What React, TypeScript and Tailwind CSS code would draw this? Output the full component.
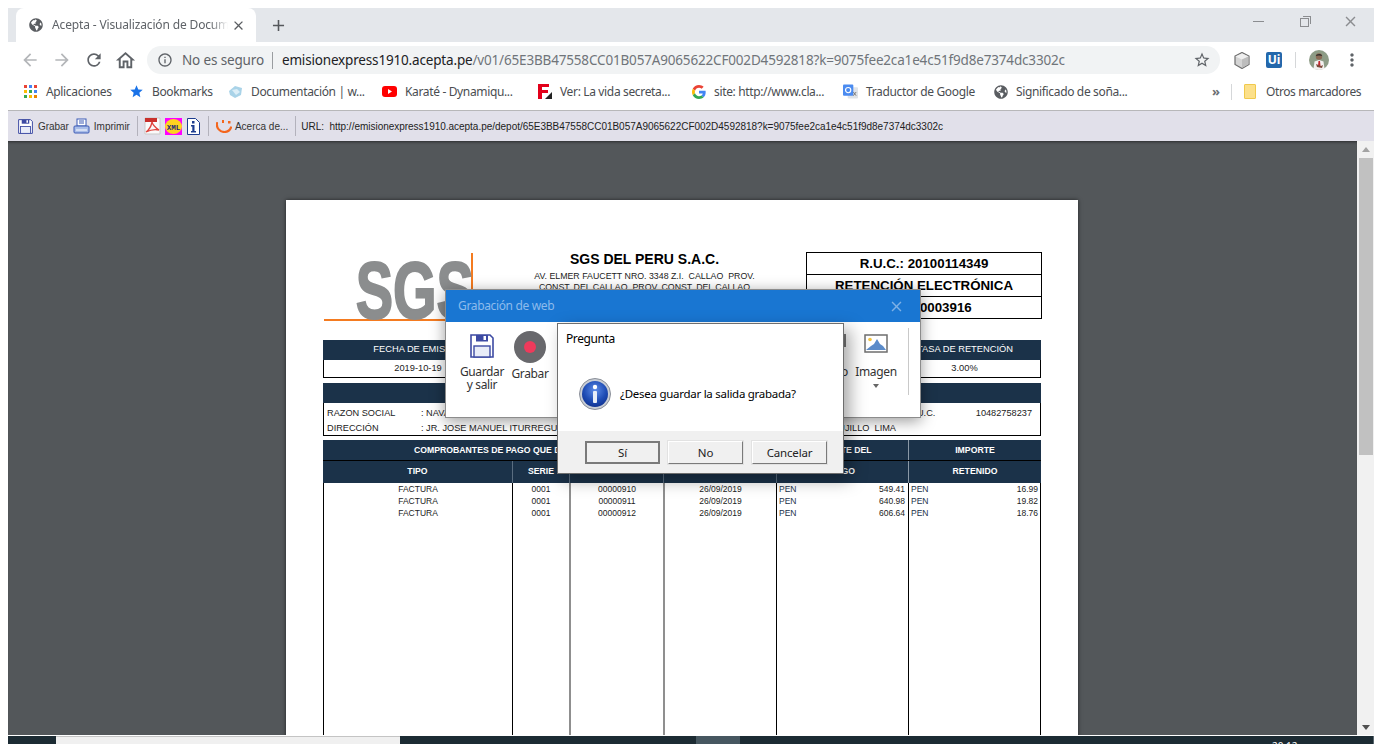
import { MdArrowBack, MdArrowForward, MdRefresh, MdOutlineHome, MdStarBorder, MdInfoOutline, MdClose, MdAdd, MdMoreVert, MdStar } from "react-icons/md";
import { FaGlobeAmericas } from "react-icons/fa";

const ui = "font-['Noto_Sans','Open_Sans',sans-serif]";
const doc = "font-['Liberation_Sans',Arial,sans-serif]";

function Floppy({ size = 16 }: { size?: number }) {
  return (
    <svg width={size} height={size} viewBox="0 0 24 24" fill="none">
      <path d="M1 1h19l3 3v19H1z" fill="#fff" stroke="#3d4aa3" strokeWidth="1.6" />
      <rect x="6" y="1" width="12" height="6.5" fill="#3d4aa3" />
      <rect x="13.5" y="2" width="2.5" height="4" fill="#fff" />
      <rect x="4" y="12" width="16" height="11" fill="#e8ecf8" stroke="#3d4aa3" strokeWidth="1.4" />
    </svg>
  );
}

function AppsIcon() {
  const colors = ["#ea4335", "#4285f4", "#ea4335", "#fbbc05", "#34a853", "#4285f4", "#34a853", "#fbbc05", "#ea8600"];
  return (
    <div className="grid w-[13px] h-[13px] grid-cols-3 gap-[2px]">
      {colors.map((c, i) => (
        <span key={i} style={{ background: c }} />
      ))}
    </div>
  );
}

function GoogleG() {
  return (
    <svg width="14" height="14" viewBox="0 0 48 48">
      <path fill="#EA4335" d="M24 9.5c3.5 0 6.700 1.300 9.100 3.500l6.800-6.800C35.800 2.400 30.300 0 24 0 14.600 0 6.500 5.400 2.600 13.200l7.900 6.200C12.400 13.600 17.700 9.500 24 9.500z" />
      <path fill="#4285F4" d="M46.900 24.500c0-1.600-.1-3.100-.4-4.500H24v9h12.900c-.6 3-2.200 5.500-4.700 7.200l7.700 6C44.400 37.900 46.900 31.800 46.900 24.500z" />
      <path fill="#FBBC05" d="M10.500 28.600c-.5-1.400-.8-3-.8-4.600s.3-3.200.8-4.600l-7.900-6.200C.9 16.500 0 20.100 0 24s.9 7.500 2.600 10.800l7.900-6.200z" />
      <path fill="#34A853" d="M24 48c6.500 0 11.900-2.100 15.900-5.800l-7.700-6c-2.200 1.400-4.900 2.300-8.200 2.300-6.300 0-11.600-4.200-13.500-9.900l-7.900 6.200C6.500 42.600 14.600 48 24 48z" />
    </svg>
  );
}

function Bookmark({ icon, label, width }: { icon: React.ReactNode; label: string; width: string }) {
  return (
    <div className={`flex items-center shrink-0 ${width}`}>
      <span className="flex w-[15px] h-4 items-center justify-center shrink-0">{icon}</span>
      <span className="ml-2 text-[12px] text-[#4a4d51] whitespace-nowrap tracking-[-0.35px]">{label}</span>
    </div>
  );
}

function TabStrip() {
  return (
    <div className="flex h-[34px] shrink-0 bg-[#e4e7eb] pl-2">
      <div className="flex w-[240px] items-center rounded-t-lg bg-white pl-[13px] pr-[10px]">
        <FaGlobeAmericas className="shrink-0 text-[14px] text-[#5a5d61]" />
        <span className="ml-[9px] w-[176px] overflow-hidden whitespace-nowrap text-[12px] text-[#5f6368] tracking-[-0.15px] [mask-image:linear-gradient(90deg,#000_90%,transparent)]">
          Acepta - Visualización de Documento
        </span>
        <MdClose className="ml-auto text-[15px] text-[#5a5d61]" />
      </div>
      <MdAdd className="ml-[13px] mt-[8px] text-[19px] text-[#55585c]" />
      <div className="ml-auto flex items-start">
        <div className="mt-[13px] mr-[36px] h-px w-[11px] bg-[#8b8d90]" />
        <div className="relative mt-[10px] mr-[33px] h-[9px] w-[9px] border border-[#8b8d90] bg-[#e4e7eb]">
          <div className="absolute -top-[3px] -right-[3px] h-[8px] w-[8px] border-t border-r border-[#8b8d90]" />
        </div>
        <MdClose className="mt-[5px] mr-[15px] text-[17px] text-[#8b8d90]" />
      </div>
    </div>
  );
}

function AddressBar() {
  return (
    <div className="flex h-9 shrink-0 items-center bg-white pl-[12px]">
      <MdArrowBack className="text-[20px] text-[#b4b6b9]" />
      <MdArrowForward className="ml-3 text-[20px] text-[#b4b6b9]" />
      <MdRefresh className="ml-3 text-[20px] text-[#5f6368]" />
      <MdOutlineHome className="ml-[10px] text-[23px] text-[#5f6368]" />
      <div className="ml-[10px] flex h-7 w-[1073px] items-center rounded-full bg-[#f1f3f4] pl-[10px] pr-[9px]">
        <MdInfoOutline className="shrink-0 text-[16px] text-[#5f6368]" />
        <span className="ml-[9px] text-[13.5px] text-[#5f6368] whitespace-nowrap tracking-[-0.15px]">No es seguro</span>
        <span className="ml-2 mr-[9px] h-[17px] w-px bg-[#9a9da0]" />
        <span className="text-[13.5px] whitespace-nowrap text-[#70757a] tracking-[-0.17px]">
          <span className="text-[#202124]">emisionexpress1910.acepta.pe</span>
          /v01/65E3BB47558CC01B057A9065622CF002D4592818?k=9075fee2ca1e4c51f9d8e7374dc3302c
        </span>
        <MdStarBorder className="ml-auto shrink-0 text-[18px] text-[#5f6368]" />
      </div>
      <svg className="ml-[14px]" width="16" height="17" viewBox="0 0 16 17">
        <path d="M8 .5l7 3.500v8.500l-7 4-7-4V4z" fill="#d4d4d4" stroke="#6d6d6d" strokeWidth="1.200" />
        <path d="M1.500 4.500L8 7.500l6.500-3L8 1.500z" fill="#efefef" />
        <path d="M8 7.500V16l6.500-3.800V4.500z" fill="#bdbdbd" />
      </svg>
      <div className="ml-4 flex h-4 w-4 items-center justify-center rounded-[2px] bg-[#2367ab] text-[12px] font-bold text-white">Ui</div>
      <span className="ml-[13px] h-4 w-px bg-[#d5d7d9]" />
      <svg className="ml-[13px]" width="20" height="20" viewBox="0 0 20 20">
        <circle cx="10" cy="10" r="10" fill="#8d9c86" />
        <circle cx="10" cy="6.500" r="3.200" fill="#8a6a55" />
        <path d="M6.800 6c.2-2.600 6-2.800 6.400 0-2-.8-4.500-.8-6.400 0z" fill="#33302c" />
        <path d="M4.500 19l1-7.500 4.500-1.500 4.500 1.500 1 7.500-5.500 1z" fill="#f3f1ef" />
        <path d="M9.500 11h1.500l.5 5H9z" fill="#c1272d" />
        <path d="M7 14l5 2 2-1-1 3-5-1z" fill="#7d4a3a" />
      </svg>
      <MdMoreVert className="ml-[13px] text-[20px] text-[#5f6368]" />
    </div>
  );
}

function BookmarksBar() {
  return (
    <div className="flex h-8 shrink-0 items-center bg-white pb-[5px] pl-[15px]">
      <Bookmark width="w-[106px]" icon={<AppsIcon />} label="Aplicaciones" />
      <Bookmark width="w-[99px]" icon={<MdStar className="text-[17px] text-[#1a73e8]" />} label="Bookmarks" />
      <Bookmark
        width="w-[154px]"
        icon={
          <svg width="15" height="14" viewBox="0 0 15 14">
            <path d="M1 6l6-5 7 2-1 7-6 3-5-3z" fill="#a9d3e8" />
            <path d="M4 5l5-1 3 3-4 3z" fill="#dceef7" />
          </svg>
        }
        label="Documentación | w..."
      />
      <Bookmark
        width="w-[155px]"
        icon={
          <svg width="15" height="11" viewBox="0 0 15 11">
            <rect width="15" height="11" rx="3" fill="#f00" />
            <path d="M6 3l4 2.500L6 8z" fill="#fff" />
          </svg>
        }
        label="Karaté - Dynamiqu..."
      />
      <Bookmark
        width="w-[154px]"
        icon={
          <svg width="14" height="15" viewBox="0 0 14 15">
            <path d="M0 0h11v3H4v3h6v3H4v6H0z" fill="#e2001a" />
            <path d="M14 8v7H7z" fill="#222" />
          </svg>
        }
        label="Ver: La vida secreta..."
      />
      <Bookmark width="w-[152px]" icon={<GoogleG />} label="site: http://www.cla..." />
      <Bookmark
        width="w-[150px]"
        icon={
          <svg width="16" height="15" viewBox="0 0 16 15">
            <rect x="5" y="3" width="11" height="12" rx="1" fill="#dfe3e8" />
            <rect width="11" height="12" rx="1" fill="#4b8bf0" />
            <circle cx="5.500" cy="6" r="2.800" fill="none" stroke="#fff" strokeWidth="1.200" />
            <path d="M11 8l3 4m0-4l-3 4" stroke="#777" strokeWidth="1" />
          </svg>
        }
        label="Traductor de Google"
      />
      <Bookmark width="w-[219px]" icon={<FaGlobeAmericas className="text-[14px] text-[#5a5d61]" />} label="Significado de soña..." />
      <span className="text-[13px] font-bold leading-none text-[#6b6e72]">»</span>
      <span className="ml-[11px] h-4 w-px bg-[#d5d7d9]" />
      <span className="ml-[12px] h-[15px] w-[12px] rounded-[1px] border border-[#f0c94c] bg-[#fce08a]" />
      <span className="ml-[10px] text-[12px] text-[#4a4d51] whitespace-nowrap tracking-[-0.4px]">Otros marcadores</span>
    </div>
  );
}

function AcrobatBar() {
  const sep = "h-5 w-px bg-[#b3b2bc]";
  return (
    <div className={`flex h-[31px] shrink-0 items-center border-t border-[#b7b7b9] bg-[#e1e0ea] pl-[10px] text-[10px] text-[#333] ${doc}`}>
      <Floppy size={15} />
      <span className="ml-[5px] tracking-[-0.05px]">Grabar</span>
      <svg className="ml-[4px]" width="17" height="16" viewBox="0 0 17 16">
        <rect x="4" y="1" width="9" height="7" fill="#fff" stroke="#3d5bb5" />
        <path d="M6 3h5M6 5h5" stroke="#3d5bb5" />
        <rect x="1" y="8" width="15" height="7" rx="1" fill="#a9bde8" stroke="#3d5bb5" />
        <path d="M3 12h11" stroke="#fff" />
      </svg>
      <span className="ml-[4px]">Imprimir</span>
      <span className={`ml-[7px] ${sep}`} />
      <svg className="ml-[6px]" width="17" height="18" viewBox="0 0 17 18">
        <path d="M1 1h15v16H1z" fill="#fafafa" stroke="#c9c9c9" />
        <rect x="1" y="1" width="12" height="4" fill="#c9302c" />
        <path d="M8 5c-1 5-3 8-6 10 4-2 9-3 13-2-3-2-6-4-7-8z" fill="none" stroke="#e0443e" strokeWidth="1.300" />
      </svg>
      <svg className="ml-[4px]" width="17" height="17" viewBox="0 0 17 17">
        <rect width="17" height="17" fill="#f0f" />
        <ellipse cx="8.500" cy="8.500" rx="8.500" ry="7.500" fill="#ffd21f" />
        <text x="8.500" y="11.500" textAnchor="middle" fontSize="7.500" fontWeight="bold" fill="#1c2a7a" fontFamily="Liberation Mono">XML</text>
      </svg>
      <svg className="ml-[5px]" width="13" height="17" viewBox="0 0 13 17">
        <path d="M.5.5h8l4 4v12H.500z" fill="#fff" stroke="#1d3c8f" />
        <rect x="5" y="3" width="2.500" height="2.500" fill="#1d3c8f" />
        <path d="M4 7h3.500v6H9v1.500H4V13h1.300V8.500H4z" fill="#1d3c8f" />
      </svg>
      <span className={`ml-[8px] ${sep}`} />
      <svg className="ml-[7px]" width="16" height="14" viewBox="0 0 16 14">
        <path d="M1 4c-1 5 3 9 7.500 9 3 0 5.500-2 6.500-4.500" fill="none" stroke="#f4661e" strokeWidth="2.200" strokeLinecap="round" />
        <rect x="6" y="1" width="2" height="3" fill="#f4661e" />
        <rect x="12" y="2" width="2.500" height="2.500" fill="#f4661e" />
      </svg>
      <span className="ml-[3px]">Acerca de...</span>
      <span className={`ml-[7px] ${sep}`} />
      <span className="ml-[5px] whitespace-pre text-[#222] tracking-[-0.02px]">URL:  http://emisionexpress1910.acepta.pe/depot/65E3BB47558CC01B057A9065622CF002D4592818?k=9075fee2ca1e4c51f9d8e7374dc3302c</span>
    </div>
  );
}

const head = "bg-[#1b3249] text-white flex items-center justify-center";

function InvoiceHeader() {
  return (
    <div className="flex h-[68px]">
      <div className="ml-px flex h-[68px] w-[149px] mt-px items-end justify-end border-r-2 border-b-2 border-[#f47b20]">
        <span className="origin-right scale-x-70 text-[80px] font-bold leading-[58px] text-[#8b8d8e] translate-x-[3px] translate-y-[1px] [-webkit-text-stroke:2px_#8b8d8e]">SGS</span>
      </div>
      <div className="ml-[10px] w-[323px] text-center text-black">
        <p className="mt-[-1px] text-[14px] leading-[16px] font-bold">SGS DEL PERU S.A.C.</p>
        <p className="mt-[4px] whitespace-pre text-[8.8px] leading-[11px] text-[#222]">AV. ELMER FAUCETT NRO. 3348 Z.I.  CALLAO  PROV.</p>
        <p className="whitespace-pre text-[8.8px] leading-[11px] text-[#222]">CONST. DEL CALLAO  PROV. CONST. DEL CALLAO</p>
      </div>
      <div className="h-[67px] w-[236px] border border-black text-center text-[13.3px] font-bold text-black">
        <div className="flex h-[22px] items-center justify-center border-b border-black">R.U.C.: 20100114349</div>
        <div className="flex h-[22px] items-center justify-center border-b border-black pt-px">RETENCIÓN ELECTRÓNICA</div>
        <div className="flex h-[21px] items-center justify-center">R001-00003916</div>
      </div>
    </div>
  );
}

function InfoTables() {
  return (
    <>
      <div className="mt-[20px] w-[718px] text-[9.3px] text-[#222]">
        <div className="grid h-5 grid-cols-[189px_377px_152px]">
          <div className={head}>FECHA DE EMISIÓN</div>
          <div className={head} />
          <div className={head}>TASA DE RETENCIÓN</div>
        </div>
        <div className="grid h-[18px] grid-cols-[189px_377px_152px] border-b border-black">
          <div className="flex items-center justify-center border-l border-black">2019-10-19</div>
          <div />
          <div className="flex items-center justify-center border-r border-black">3.00%</div>
        </div>
      </div>
      <div className="mt-[5px] w-[718px] text-[9.2px] text-[#222]">
        <div className={`${head} h-5`} />
        <div className="h-[33px] border-x border-b border-black pl-[3px] pt-[2px]">
          <div className="flex h-[17px] items-center">
            <span className="w-[94px]">RAZON SOCIAL</span>
            <span>: NAVARRO SALAZAR JOSE</span>
            <span className="ml-auto w-[68px]">R.U.C.</span>
            <span className="mr-[8px]">10482758237</span>
          </div>
          <div className="flex h-[14px] items-center">
            <span className="w-[94px]">DIRECCIÓN</span>
            <span>: JR. JOSE MANUEL ITURREGUI 1180 URB. SANTA MARIA</span>
            <span className="ml-auto mr-[144px] whitespace-pre">TRUJILLO  LIMA</span>
          </div>
        </div>
      </div>
    </>
  );
}

const rows = [
  { num: "00000910", pago: "549.41", ret: "16.99" },
  { num: "00000911", pago: "640.98", ret: "19.82" },
  { num: "00000912", pago: "606.64", ret: "18.76" },
];
const cols = "grid w-[718px] grid-cols-[189px_57px_94px_113px_132px_133px]";

function VoucherTable() {
  return (
    <div className="mt-[4px] w-[718px] text-[8.5px] text-[#222]">
      <div className={`${cols} h-[21px] border-b border-black text-[8.7px] font-bold`}>
        <div className={`${head} col-span-4 pt-[2px]`}>COMPROBANTES DE PAGO QUE DAN ORIGEN A LA RETENCIÓN</div>
        <div className={`${head} pt-[2px]`}>IMPORTE DEL</div>
        <div className={`${head} border-l border-[#8a98a6] pt-[2px]`}>IMPORTE</div>
      </div>
      <div className={`${cols} h-[22px] text-[8.7px] font-bold`}>
        <div className={`${head} pb-px`}>TIPO</div>
        <div className={`${head} border-l border-[#5a6d80] pb-px`}>SERIE</div>
        <div className={`${head} border-l border-[#5a6d80] pb-px`}>NÚMERO</div>
        <div className={`${head} border-l border-[#5a6d80] pb-px`}>FECHA</div>
        <div className={`${head} border-l border-[#5a6d80] pb-px`}>PAGO</div>
        <div className={`${head} border-l border-[#8a98a6] pb-px`}>RETENIDO</div>
      </div>
      <div className="grid h-[400px] w-[718px] grid-cols-[188px_57px_94px_113px_132px_132px] border-x border-black leading-[12px]">
        <div className="text-center">
          {rows.map((r) => <p key={r.num}>FACTURA</p>)}
        </div>
        <div className="border-l border-black text-center">
          {rows.map((r) => <p key={r.num}>0001</p>)}
        </div>
        <div className="border-l-2 border-[#8f8f8f] text-center">
          {rows.map((r) => <p key={r.num}>{r.num}</p>)}
        </div>
        <div className="border-l-2 border-[#8f8f8f] text-center">
          {rows.map((r) => <p key={r.num}>26/09/2019</p>)}
        </div>
        <div className="border-l border-black pl-[2px] pr-[3px]">
          {rows.map((r) => (
            <p key={r.num} className="flex justify-between"><span className="text-[#1b3249]">PEN</span><span>{r.pago}</span></p>
          ))}
        </div>
        <div className="border-l border-black pl-[2px] pr-[2px]">
          {rows.map((r) => (
            <p key={r.num} className="flex justify-between"><span className="text-[#1b3249]">PEN</span><span>{r.ret}</span></p>
          ))}
        </div>
      </div>
    </div>
  );
}

function Viewer() {
  return (
    <div className="flex min-h-0 flex-1">
      <div className="min-w-0 flex-1 overflow-hidden bg-[#53575a] shadow-[inset_0_3px_3px_-2px_rgba(0,0,0,0.5)]">
        <div className={`ml-[278px] mt-[59px] h-[900px] w-[792px] bg-white pl-[37px] pt-[52px] shadow-[0_0_4px_rgba(0,0,0,0.6)] ${doc}`}>
          <InvoiceHeader />
          <InfoTables />
          <VoucherTable />
        </div>
      </div>
      <div className="flex w-[17px] shrink-0 flex-col items-center bg-[#f1f1f1]">
        <div className="mt-[6px] h-0 w-0 border-x-[4px] border-b-[5px] border-x-transparent border-b-[#a3a3a3]" />
        <div className="mt-[6px] h-[297px] w-[14px] bg-[#c1c1c1]" />
        <div className="mt-auto mb-[5px] h-0 w-0 border-x-[4px] border-t-[5px] border-x-transparent border-t-[#505050]" />
      </div>
    </div>
  );
}

function Taskbar() {
  return (
    <div className="mt-px flex h-2 shrink-0 bg-[#1c2b33]">
      <div className="ml-[48px] w-[344px] border-t border-[#c4c4c4] bg-[#f0f0f0]" />
      <div className="ml-[296px] w-[44px] bg-[#465760]" />
      <div className="ml-[532px] overflow-hidden">
        <span className="mt-[4px] block text-[10px] leading-[12px] text-white">20:12</span>
      </div>
      <div className="ml-auto w-px bg-[#5a6870]" />
    </div>
  );
}

function RecordingWindow() {
  return (
    <div className={`absolute left-[445px] top-[289px] h-[129px] w-[476px] border border-[#8c8c8c] bg-white shadow-[0_3px_14px_rgba(0,0,0,0.4)] ${ui}`}>
      <div className="flex h-[32px] items-center justify-between bg-[#1976d2] pl-[12px] pr-[15px]">
        <span className="text-[12px] tracking-[-0.35px] text-[#8dbbec]">Grabación de web</span>
        <MdClose className="text-[17px] text-[#7fb1e6]" />
      </div>
      <div className="flex h-[95px] text-[12px] leading-[13px] text-[#333] tracking-[-0.35px]">
        <div className="ml-[11px] flex w-[50px] flex-col items-center pt-[12px] text-center">
          <Floppy size={24} />
          <span className="mt-[7px]">Guardar y salir</span>
        </div>
        <div className="ml-[5px] flex w-[36px] flex-col items-center pt-[9px]">
          <svg width="32" height="32" viewBox="0 0 32 32">
            <circle cx="16" cy="16" r="16" fill="#68686c" />
            <circle cx="16" cy="16" r="6" fill="#ee3a5b" />
          </svg>
          <span className="mt-[4px]">Grabar</span>
        </div>
        <div className="ml-auto flex w-[34px] flex-col items-end pt-[12px]">
          <div className="mr-[2px] h-[13px] w-[24px] bg-[#7a7a7a]" />
          <span className="mt-[18px]">Texto</span>
        </div>
        <div className="ml-[11px] flex w-[34px] flex-col items-center pt-[12px]">
          <svg width="24" height="19" viewBox="0 0 24 19">
            <rect x="1" y="1" width="22" height="17" fill="#fff" stroke="#6e6e6e" strokeWidth="1.500" />
            <circle cx="6" cy="5.500" r="1.800" fill="#f4c542" />
            <path d="M2 16l5-4 3-2 3-5 3 5 3 2 3 4z" fill="#5b8bc9" />
          </svg>
          <span className="mt-[12px]">Imagen</span>
          <span className="mt-[6px] h-0 w-0 border-x-[3.5px] border-t-[4px] border-x-transparent border-t-[#666]" />
        </div>
        <span className="ml-[15px] mr-[11px] mt-[6px] h-[67px] w-px bg-[#c9c9c9]" />
      </div>
    </div>
  );
}

function InfoIcon() {
  return (
    <svg width="32" height="32" viewBox="0 0 32 32">
      <defs>
        <radialGradient id="infoBlue" cx="50%" cy="35%" r="70%">
          <stop offset="0%" stopColor="#5f8de8" />
          <stop offset="60%" stopColor="#1f4db5" />
          <stop offset="100%" stopColor="#0f2f8c" />
        </radialGradient>
      </defs>
      <circle cx="16" cy="16" r="15.500" fill="#c9ced6" stroke="#8a8f98" />
      <circle cx="16" cy="16" r="13" fill="url(#infoBlue)" />
      <circle cx="16" cy="9" r="2.200" fill="#fff" />
      <rect x="14" y="13" width="4" height="12" rx="1" fill="#e8eef8" />
    </svg>
  );
}

function QuestionDialog() {
  const btn = "flex h-[23px] w-[75px] items-center justify-center bg-[#f0f0f0] text-[11.5px] tracking-[-0.2px] text-[#222]";
  const plain = "border border-t-white border-l-white border-r-[#7a7a7a] border-b-[#7a7a7a] shadow-[0_0_0_1px_#e2e2e2]";
  return (
    <div className={`absolute left-[557px] top-[323px] flex h-[151px] w-[287px] flex-col border border-[#6e6e6e] bg-white shadow-[6px_6px_16px_rgba(0,0,0,0.35)] ${ui}`}>
      <div className="pl-2 pt-[7px] text-[12px] leading-[16px] tracking-[-0.4px] text-black">Pregunta</div>
      <div className="flex flex-1 items-center pl-[21px] pt-[10px]">
        <InfoIcon />
        <span className="ml-[9px] text-[11.5px] tracking-[-0.27px] text-black">¿Desea guardar la salida grabada?</span>
      </div>
      <div className="flex h-[42px] items-center gap-2 bg-[#f0f0f0] pl-[27px] pt-[1px]">
        <div className={`${btn} border-2 border-[#7a7a7a]`}>Sí</div>
        <div className={`${btn} ${plain}`}>No</div>
        <div className={`${btn} ${plain} ml-px`}>Cancelar</div>
      </div>
    </div>
  );
}

export default function App() {
  return (
    <div className={`relative flex h-screen w-full flex-col overflow-hidden bg-white pl-2 pr-2 pt-2 ${ui}`}>
      <TabStrip />
      <AddressBar />
      <BookmarksBar />
      <AcrobatBar />
      <Viewer />
      <Taskbar />
      <RecordingWindow />
      <QuestionDialog />
    </div>
  );
}
